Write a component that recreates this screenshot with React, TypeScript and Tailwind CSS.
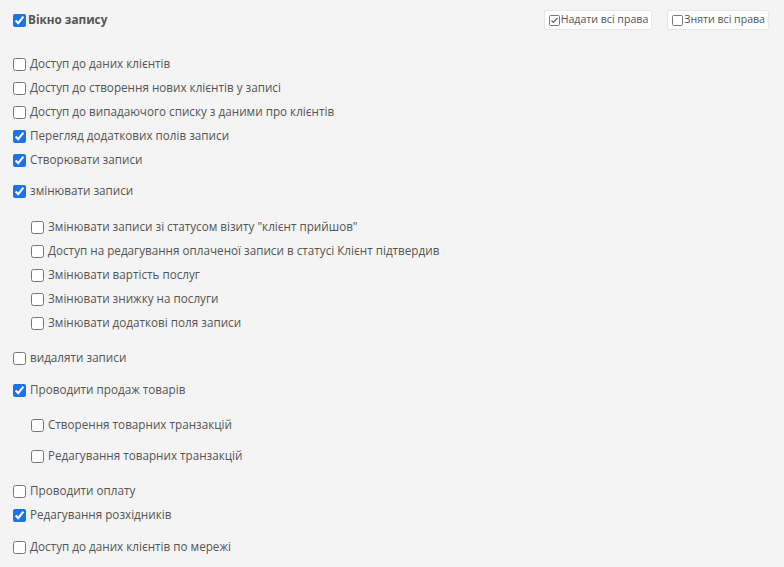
import React from 'react';

type Perm = { label: string; checked: boolean; className: string; nested?: boolean };

const perms: Perm[] = [
  { label: 'Доступ до даних клієнтів', checked: false, className: 'mt-[22px]' },
  { label: 'Доступ до створення нових клієнтів у записі', checked: false, className: '' },
  { label: 'Доступ до випадаючого списку з даними про клієнтів', checked: false, className: '' },
  { label: 'Перегляд додаткових полів записи', checked: true, className: '' },
  { label: 'Створювати записи', checked: true, className: '' },
  { label: 'змінювати записи', checked: true, className: 'mt-[7px]' },
  { label: 'Змінювати записи зі статусом візиту "клієнт прийшов"', checked: false, className: 'mt-[12px]', nested: true },
  { label: 'Доступ на редагування оплаченої записи в статусі Клієнт підтвердив', checked: false, className: '', nested: true },
  { label: 'Змінювати вартість послуг', checked: false, className: '', nested: true },
  { label: 'Змінювати знижку на послуги', checked: false, className: '', nested: true },
  { label: 'Змінювати додаткові поля записи', checked: false, className: '', nested: true },
  { label: 'видаляти записи', checked: false, className: 'mt-[11px]' },
  { label: 'Проводити продаж товарів', checked: true, className: 'mt-[8px]' },
  { label: 'Створення товарних транзакцій', checked: false, className: 'mt-[11px]', nested: true },
  { label: 'Редагування товарних транзакцій', checked: false, className: 'mt-[7px]', nested: true },
  { label: 'Проводити оплату', checked: false, className: 'mt-[11px]' },
  { label: 'Редагування розхідників', checked: true, className: '' },
  { label: 'Доступ до даних клієнтів по мережі', checked: false, className: 'mt-[8px]' },
];

function BoxIcon({ checked }: { checked: boolean }) {
  return (
    <svg width="11" height="11" viewBox="0 0 11 11" className="shrink-0">
      <rect x="0.5" y="0.5" width="10" height="10" rx="1" fill="white" stroke="#777" />
      {checked && <path d="M2.5 5.5 L4.5 7.5 L8.5 3" fill="none" stroke="#666" strokeWidth="1.2" />}
    </svg>
  );
}

function ActionButton({ checked, label }: { checked: boolean; label: string }) {
  return (
    <button className="flex h-[20px] shrink-0 items-center gap-[1px] whitespace-nowrap rounded-[2px] border border-[#e6e6e6] bg-white pl-[4px] pr-[3px] text-[10.6px] text-[#555]">
      <BoxIcon checked={checked} />
      <span>{label}</span>
    </button>
  );
}

function Row({ p }: { p: Perm }) {
  return (
    <label className={`flex h-[24px] items-center ${p.nested ? 'pl-[18px]' : ''} ${p.className}`}>
      <input type="checkbox" defaultChecked={p.checked} className="m-0 h-[13px] w-[13px] accent-[#1a73e8]" />
      <span className="ml-[4px] text-[11.7px] text-[#555]">{p.label}</span>
    </label>
  );
}

export default function App() {
  return (
    <div className="h-[567px] w-[784px] overflow-hidden bg-[#f4f4f4] px-[13px] pt-[10px]" style={{ fontFamily: '"Open Sans", sans-serif' }}>
      <div className="flex h-[20px] items-center justify-between">
        <label className="flex items-center">
          <input type="checkbox" defaultChecked className="m-0 h-[13px] w-[13px] accent-[#1a73e8]" />
          <span className="ml-[2px] text-[11.75px] font-bold text-[#555]">Вікно запису</span>
        </label>
        <div className="mr-[2px] flex gap-[15px]">
          <ActionButton checked label="Надати всі права" />
          <ActionButton checked={false} label="Зняти всі права" />
        </div>
      </div>
      <div className="flex flex-col">
        {perms.map((p) => (
          <Row key={p.label} p={p} />
        ))}
      </div>
    </div>
  );
}
